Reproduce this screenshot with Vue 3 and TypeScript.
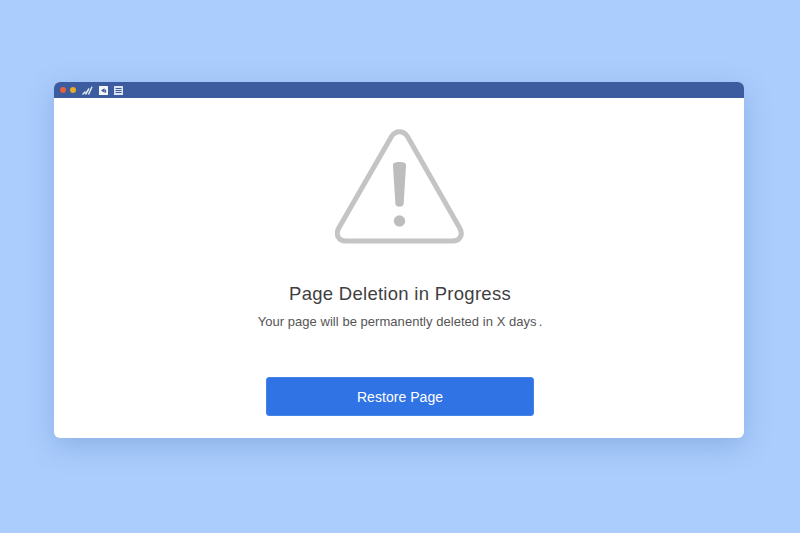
<template>
  <div class="page">
    <div class="window">
      <div class="titlebar">
        <span class="dot red"></span>
        <span class="dot amber"></span>
        <svg class="tool signal" width="11" height="9" viewBox="0 0 11 9">
          <path d="M0.5 8.5 L3.5 5.5 M3.5 8.5 L7 2.5 M6.5 8.5 L10 0.8" stroke="#dfe6f4" stroke-width="1.5" fill="none" />
        </svg>
        <svg class="tool" width="9" height="9" viewBox="0 0 9 9">
          <rect width="9" height="9" rx="0.5" fill="#f4f6fb" />
          <path d="M2 4.5 L5.5 2.2 V6.8 Z" fill="#3f5a96" />
          <rect x="5.6" y="3.6" width="1.5" height="3" fill="#3f5a96" />
        </svg>
        <svg class="tool" width="9" height="9" viewBox="0 0 9 9">
          <rect width="9" height="9" rx="0.5" fill="#dde3f0" />
          <path d="M1.5 2.5 H7.5 M1.5 4.5 H7.5 M1.5 6.5 H7.5" stroke="#3f5a96" stroke-width="1" />
        </svg>
      </div>
      <main class="content">
        <svg class="warning" width="130" height="115" viewBox="0 0 130 115" fill="none">
          <path
            d="M56.5 7.5 C60.5 1.2 68.5 1.2 72.5 7.5 L124.7 99 C128.5 105.8 125 112 117.5 112 H11 C3.5 112 0 105.8 3.8 99 Z"
            stroke="#c4c4c4"
            stroke-width="5"
            stroke-linejoin="round"
          />
          <path d="M58 36.5 C58 33.8 60 33 64.5 33 C69 33 71 33.8 71 36.5 L68.6 75 C68.3 78.6 60.7 78.6 60.4 75 Z" fill="#bdbdbd" />
          <circle cx="64.5" cy="92" r="5.7" fill="#bdbdbd" />
        </svg>
        <h1 class="title">{{ title }}</h1>
        <p class="message">Your page will be permanently deleted in {{ remaining }} days<span class="stop">.</span></p>
        <button class="restore" type="button">Restore Page</button>
      </main>
    </div>
  </div>
</template>

<script setup lang="ts">
const title = 'Page Deletion in Progress'
const remaining = 'X'
</script>

<style>
html,
body {
  margin: 0;
  background: #abcdfd;
}
</style>

<style scoped>
.page {
  width: 800px;
  height: 533px;
  box-sizing: border-box;
  padding: 82px 56px 0 54px;
  overflow: hidden;
  background: #abcdfd;
  font-family: "Liberation Sans", Arial, sans-serif;
}
.window {
  height: 356px;
  display: flex;
  flex-direction: column;
  border-radius: 6px;
  overflow: hidden;
  background: #fff;
  box-shadow: 0 8px 28px rgba(60, 100, 170, 0.28);
}
.titlebar {
  height: 16px;
  flex: none;
  display: flex;
  align-items: center;
  padding-left: 6px;
  background: #3c5c9f;
}
.dot {
  width: 6px;
  height: 6px;
  border-radius: 50%;
}
.red {
  background: #e4613a;
}
.amber {
  margin-left: 4px;
  background: #eaa928;
}
.tool {
  margin-left: 6px;
}
.signal {
  margin-left: 6px;
}
.content {
  flex: 1;
  display: flex;
  flex-direction: column;
  align-items: center;
  padding: 31px 0 0 2px;
}
.warning {
  display: block;
}
.title {
  margin: 39px 0 0;
  font-size: 18.5px;
  line-height: 22px;
  font-weight: 400;
  letter-spacing: 0.28px;
  color: #3f3f3f;
}
.message {
  margin: 9px 0 0;
  font-size: 13px;
  line-height: 16px;
  letter-spacing: 0.04px;
  color: #555;
}
.stop {
  margin-left: 2px;
}
.restore {
  width: 268px;
  height: 39px;
  margin-top: 47px;
  border: 1px solid #4483ea;
  border-radius: 3px;
  background: #2f73e4;
  color: #fff;
  font: inherit;
  font-size: 14px;
  letter-spacing: 0.05px;
}
</style>
